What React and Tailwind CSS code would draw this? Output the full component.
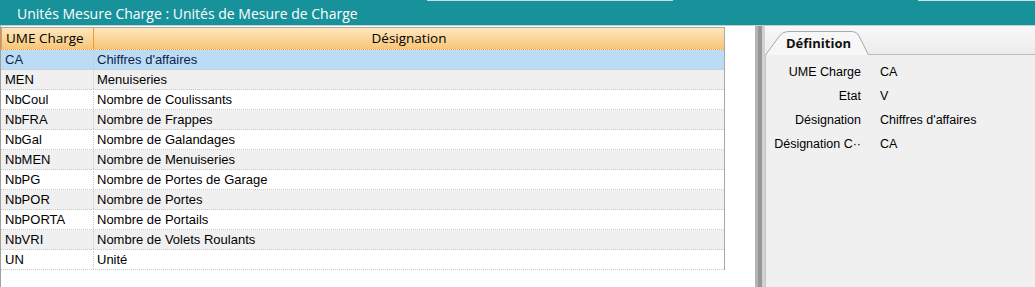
const rows = [
  ['CA', "Chiffres d'affaires"],
  ['MEN', 'Menuiseries'],
  ['NbCoul', 'Nombre de Coulissants'],
  ['NbFRA', 'Nombre de Frappes'],
  ['NbGal', 'Nombre de Galandages'],
  ['NbMEN', 'Nombre de Menuiseries'],
  ['NbPG', 'Nombre de Portes de Garage'],
  ['NbPOR', 'Nombre de Portes'],
  ['NbPORTA', 'Nombre de Portails'],
  ['NbVRI', 'Nombre de Volets Roulants'],
  ['UN', 'Unité'],
];

const fields = [
  ['UME Charge', 'CA'],
  ['Etat', 'V'],
  ['Désignation', "Chiffres d'affaires"],
  ['Désignation C··', 'CA'],
];

function rowBg(i) {
  if (i === 0) return 'bg-[#bcdcf5] text-[#0c1f4a]';
  return i % 2 === 1 ? 'bg-[#f0f0f0]' : 'bg-white';
}

export default function App() {
  return (
    <div className="w-[1035px] h-[287px] flex flex-col bg-white overflow-hidden font-['Liberation_Sans',Arial,sans-serif] text-[13px] text-black">
      {/* top strip */}
      <div className="flex h-px">
        <div className="w-[427px] bg-[#17929b]" />
        <div className="w-[246px] bg-[#cfdcdd]" />
        <div className="w-[245px] bg-[#17929b]" />
        <div className="flex-1 bg-[#d3dfe0]" />
      </div>
      <div className="h-[24px] bg-[#17929b] flex items-center pl-[17px] text-white font-['Open_Sans',sans-serif] text-[14px]">
        Unités Mesure Charge : Unités de Mesure de Charge
      </div>

      <div className="flex flex-1 border-t border-[#c4cfd0]">
        {/* left grid panel */}
        <div className="w-[755px] bg-white border-l border-[#a0a0a0] pt-px">
          <div className="w-[724px] h-[243px] border border-[#a9a9a9] border-l-0">
            <div className="flex h-[22px] bg-gradient-to-b from-[#fde7bb] to-[#f7c677] border-b border-dotted border-[#ef9a36] font-['Open_Sans',sans-serif] text-[13.5px]">
              <div className="w-[93px] flex items-center pl-[4px] border-l border-r border-[#f09a3a]">
                UME Charge
              </div>
              <div className="flex-1 flex items-center justify-center">Désignation</div>
            </div>
            {rows.map(([code, label], i) => (
              <div
                key={code}
                className={`flex h-[20px] pt-px border-b border-dotted border-[#c9c9c9] ${rowBg(i)}`}
              >
                <div className="w-[93px] flex items-center pl-[4px] border-r border-dotted border-[#c9c9c9]">
                  {code}
                </div>
                <div className="flex-1 flex items-center pl-[3px]">{label}</div>
              </div>
            ))}
          </div>
        </div>

        {/* splitter */}
        <div className="w-[3px] bg-[#b4b4b4]" />
        <div className="w-[4px] bg-[#979797]" />
        <div className="w-[3px] bg-[#d2d2d2]" />

        {/* right panel */}
        <div className="flex-1 flex flex-col bg-[#f0f0f0]">
          <div className="h-[29px] bg-gradient-to-b from-[#f8f8f8] to-[#ececec] flex items-end border-b border-[#bdbdbd]">
            <div className="relative w-[104px] h-[24px] -mb-px">
              <svg className="absolute inset-0" width="104" height="24" viewBox="0 0 104 24">
                <path
                  d="M0.5 24 L13 7 Q17 0.5 24 0.5 L86 0.5 Q92 0.5 94 5 L103.5 24"
                  fill="#f7f7f7"
                  stroke="#a9a9a9"
                />
              </svg>
              <div className="relative h-full flex items-center pl-[21px] pt-[2px] font-['Open_Sans',sans-serif] font-bold text-[13px] text-[#111]">
                Définition
              </div>
            </div>
          </div>
          <div className="flex-1 border-l border-[#c8c8c8] pt-[5px] text-[12.5px]">
            {fields.map(([k, v]) => (
              <div key={k} className="flex h-[24px] items-center">
                <div className="w-[95px] text-right whitespace-nowrap">{k}</div>
                <div className="pl-[19px]">{v}</div>
              </div>
            ))}
          </div>
        </div>
      </div>
    </div>
  );
}
